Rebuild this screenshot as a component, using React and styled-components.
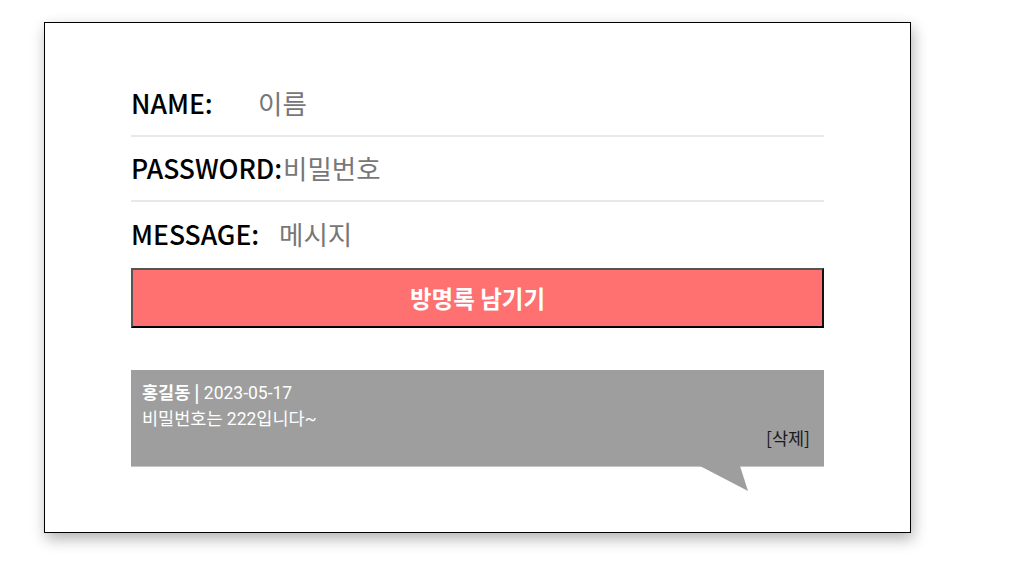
import React from 'react';
import styled, { createGlobalStyle } from 'styled-components';

const GlobalStyle = createGlobalStyle`
  body {
    margin: 0;
    background: #fff;
    font-family: "Noto Sans CJK KR", "Noto Sans", sans-serif;
  }
`;

const Page = styled.div`
  padding: 22px 0 0 44px;
  width: 1017px;
  height: 577px;
  box-sizing: border-box;
`;

const Card = styled.div`
  width: 867px;
  height: 511px;
  box-sizing: border-box;
  border: 1px solid #000;
  background: #fff;
  box-shadow: 2px 6px 14px rgba(0, 0, 0, 0.3);
  padding: 49px 86px 0 86px;
`;

const Form = styled.form`
  display: flex;
  flex-direction: column;
`;

const Row = styled.div`
  display: flex;
  align-items: center;
  height: 65px;
  padding-bottom: 2px;
  border-bottom: ${(p) => (p.last ? 'none' : '2px solid #e8e8e8')};
  box-sizing: border-box;
`;

const Label = styled.label`
  font-size: 26.5px;
  font-weight: 500;
  color: #000;
  width: ${(p) => p.w}px;
  flex-shrink: 0;
  white-space: nowrap;
`;

const Input = styled.input`
  flex: 1;
  border: none;
  outline: none;
  padding: 0;
  font-family: "Noto Sans CJK KR", sans-serif;
  font-size: 26.5px;
  color: #333;
  background: transparent;
  &::placeholder {
    color: #777;
  }
`;

const Submit = styled.button`
  margin-top: 1px;
  height: 60px;
  background: #ff7070;
  border-style: solid;
  border-width: 2px;
  border-color: #555 #111 #000 #555;
  color: #fff;
  font-family: "Noto Sans CJK KR", sans-serif;
  font-size: 23.5px;
  font-weight: 700;
  cursor: pointer;
`;

const Comment = styled.div`
  position: relative;
  margin-top: 42px;
  height: 97px;
  box-sizing: border-box;
  background: #9e9e9e;
  border-bottom: 1px solid #c4c4c4;
  padding: 9px 14px 0 11px;
  color: #fff;
  font-family: "Roboto", "Noto Sans CJK KR", sans-serif;
  font-size: 17.5px;
  line-height: 26px;
  display: flex;
  flex-direction: column;

  &::after {
    content: '';
    position: absolute;
    left: 569px;
    top: 96px;
    width: 48px;
    height: 25px;
    background: #9e9e9e;
    clip-path: polygon(0 0, 40px 0, 48px 25px);
  }
`;

const Author = styled.span`
  font-family: "Noto Sans CJK KR", sans-serif;
  font-weight: 700;
`;

const Delete = styled.span`
  align-self: flex-end;
  margin-top: -7px;
  color: #1a1a1a;
  font-family: "Noto Sans CJK KR", sans-serif;
  cursor: pointer;
`;

export default function App() {
  return (
    <Page>
      <GlobalStyle />
      <Card>
        <Form onSubmit={(e) => e.preventDefault()}>
          <Row>
            <Label w={127}>NAME:</Label>
            <Input placeholder="이름" />
          </Row>
          <Row>
            <Label w={152}>PASSWORD:</Label>
            <Input type="password" placeholder="비밀번호" />
          </Row>
          <Row last>
            <Label w={148}>MESSAGE:</Label>
            <Input placeholder="메시지" />
          </Row>
          <Submit type="submit">방명록 남기기</Submit>
        </Form>
        <Comment>
          <div>
            <Author>홍길동 |</Author> 2023-05-17
          </div>
          <div>비밀번호는 222입니다~</div>
          <Delete>[삭제]</Delete>
        </Comment>
      </Card>
    </Page>
  );
}
